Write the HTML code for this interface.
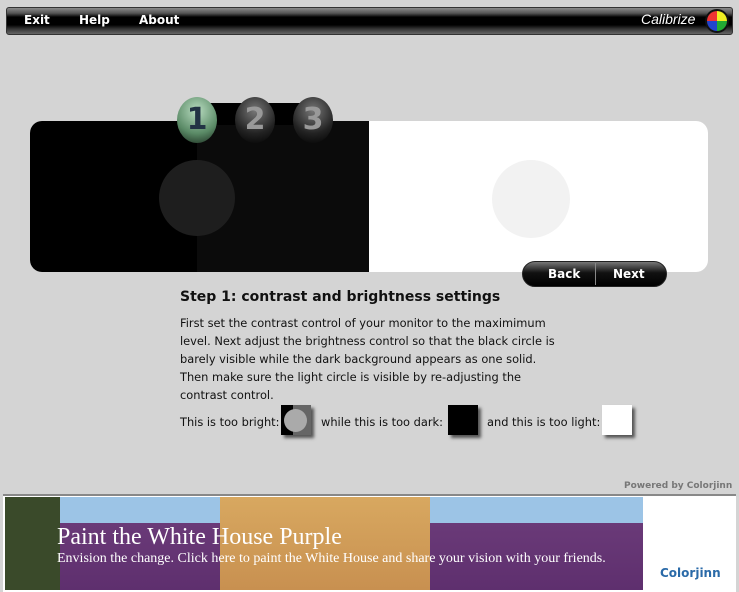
<!DOCTYPE html>
<html><head><style>
body{margin:0;width:739px;height:590px;background:#d4d4d4;font-family:"DejaVu Sans","Liberation Sans",sans-serif;position:relative;overflow:hidden}
.a{position:absolute}
.bar{left:6px;top:7px;width:727px;height:28px;border-radius:3px;background:linear-gradient(#8a8a8a 0,#555 20%,#000 35%,#000 65%,#333 80%,#666 100%);border:1px solid #333;box-sizing:border-box}
.menu{color:#fff;font:bold 12px "DejaVu Sans",sans-serif;top:13px}
.p{font-size:11.4px;color:#111;line-height:18px;white-space:nowrap}
.bub{width:40px;height:46px;border-radius:50%;top:97px;background:radial-gradient(circle at 50% 30%,#777,#222 60%,#000);color:#999;font:bold 30px "DejaVu Sans",sans-serif;text-align:center;line-height:46px}
</style></head><body>
<div class="a bar"></div>
<div class="a menu" style="left:24px">Exit</div>
<div class="a menu" style="left:79px">Help</div>
<div class="a menu" style="left:139px">About</div>
<div class="a" style="left:641px;top:11px;color:#fff;font:italic 14px 'Liberation Sans',sans-serif">Calibrize</div>
<svg class="a" style="left:704px;top:8px" width="26" height="26" viewBox="0 0 26 26"><circle cx="13" cy="13" r="12" fill="#111"/><path d="M13 3A10 10 0 0 0 3 13H13Z" fill="#e33"/><path d="M13 3A10 10 0 0 1 23 13H13Z" fill="#ee2"/><path d="M3 13A10 10 0 0 0 13 23V13Z" fill="#24c"/><path d="M23 13A10 10 0 0 1 13 23V13Z" fill="#2a3"/></svg>

<div class="a" style="left:30px;top:121px;width:678px;height:151px;border-radius:12px;background:#fff;overflow:hidden">
<div class="a" style="left:0;top:0;width:167px;height:151px;background:#000"></div>
<div class="a" style="left:167px;top:0;width:172px;height:151px;background:#0b0b0b"></div>
<div class="a" style="left:129px;top:39px;width:76px;height:76px;border-radius:50%;background:#1e1e1e"></div>
<div class="a" style="left:462px;top:39px;width:78px;height:78px;border-radius:50%;background:#f2f2f2"></div>
</div>
<div class="a" style="left:200px;top:103px;width:130px;height:22px;background:#000;border-radius:11px"></div>
<div class="a bub" style="left:177px;background:radial-gradient(circle at 50% 30%,#b8dcc0,#5a8a66 60%,#1a2a1e);color:#234"><span>1</span></div>
<div class="a bub" style="left:235px">2</div>
<div class="a bub" style="left:293px">3</div>

<div class="a" style="left:522px;top:261px;width:145px;height:26px;border-radius:13px;background:linear-gradient(#777,#111 45%,#000);border:1px solid #222;box-sizing:border-box"></div>
<div class="a" style="left:595px;top:263px;width:1px;height:22px;background:#888"></div>
<div class="a" style="left:548px;top:267px;color:#fff;font:bold 12px 'DejaVu Sans',sans-serif">Back</div>
<div class="a" style="left:613px;top:267px;color:#fff;font:bold 12px 'DejaVu Sans',sans-serif">Next</div>

<div class="a" style="left:180px;top:289px;font:bold 14px 'DejaVu Sans',sans-serif;color:#111">Step 1: contrast and brightness settings</div>
<div class="a p" style="left:180px;top:314px">First set the contrast control of your monitor to the maximimum<br>level. Next adjust the brightness control so that the black circle is<br>barely visible while the dark background appears as one solid.<br>Then make sure the light circle is visible by re-adjusting the<br>contrast control.</div>
<div class="a p" style="left:180px;top:413px">This is too bright:</div>
<div class="a" style="left:281px;top:405px;width:30px;height:30px;background:linear-gradient(90deg,#000 40%,#666 40%);box-shadow:3px 3px 3px #555"></div>
<div class="a" style="left:284px;top:409px;width:23px;height:23px;border-radius:50%;background:#aaa"></div>
<div class="a p" style="left:321px;top:413px">while this is too dark:</div>
<div class="a" style="left:448px;top:405px;width:30px;height:30px;background:#000;box-shadow:3px 3px 3px #555"></div>
<div class="a p" style="left:487px;top:413px">and this is too light:</div>
<div class="a" style="left:602px;top:405px;width:30px;height:30px;background:#fff;box-shadow:3px 3px 3px #555"></div>

<div class="a" style="left:624px;top:481px;font:bold 9px 'DejaVu Sans',sans-serif;color:#777">Powered by Colorjinn</div>
<div class="a" style="left:3px;top:494px;width:733px;height:96px;background:#fff;border-top:2px solid #888"></div>
<div class="a" style="left:5px;top:497px;width:638px;height:93px;background:linear-gradient(#9cc4e6 0,#9cc4e6 28%,#6a3a78 28%,#5e2f6e 100%)"></div>
<div class="a" style="left:5px;top:497px;width:55px;height:93px;background:#3a4a2a"></div>
<div class="a" style="left:220px;top:497px;width:210px;height:93px;background:linear-gradient(#d8a860,#c89050)"></div>
<div class="a" style="left:57px;top:524px;color:#fff;font:24px 'Liberation Serif',serif">Paint the White House Purple</div>
<div class="a" style="left:57px;top:551px;color:#fff;font:14px 'Liberation Serif',serif">Envision the change. Click here to paint the White House and share your vision with your friends.</div>
<div class="a" style="left:660px;top:566px;color:#2a6aa8;font:bold 12px 'DejaVu Sans',sans-serif">Colorjinn</div>
</body></html>
